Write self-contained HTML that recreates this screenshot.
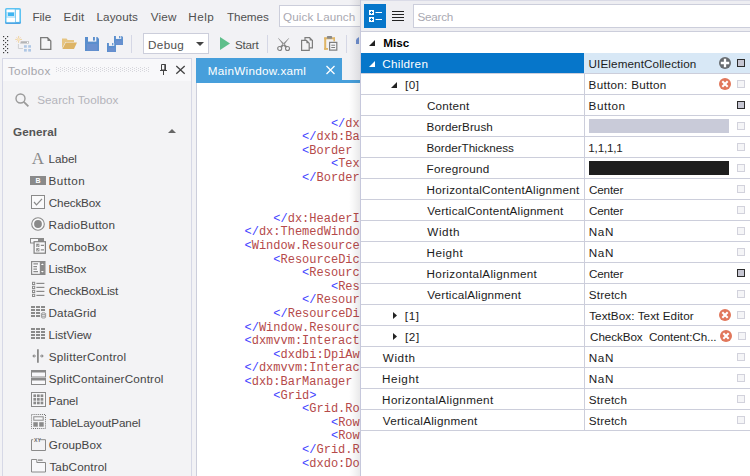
<!DOCTYPE html>
<html><head><meta charset="utf-8"><title>Designer</title>
<style>
*{box-sizing:border-box;margin:0;padding:0}
html,body{width:750px;height:476px;overflow:hidden;background:#f2f2f5}
body{position:relative;font-family:"Liberation Sans",sans-serif;font-size:12px;color:#3f3f3f}
.a{position:absolute}
.tx{position:absolute;white-space:nowrap;line-height:16px;height:16px;font-size:11.7px}
.m{color:#505050}
.ph{color:#a9a9b2}
.ph2{color:#b3b3bb}
.tbh{color:#a6a6ac}
.gen{color:#555;font-weight:bold}
.it{color:#454545}
.tab{color:#fff}
.p{color:#1c1c1c}
.b{color:#000;font-weight:bold}
.w{color:#fff}
.code{position:absolute;left:244.5px;top:117.7px;font-family:"Liberation Mono",monospace;font-size:12px;line-height:13.6px;color:#b54a4a;white-space:pre}
.code div{height:13.6px}
.bl{color:#4444ff}
.hl{position:absolute;left:361px;width:389px;height:1px;background:#ccceDB}
.mk{position:absolute;left:737px;width:8px;height:8px;border:1px solid #d2d2dc;background:#f5f5f7}
.mk.on{border-color:#2b2b2b;background:#c6c6d2}
svg{position:absolute;overflow:visible}
</style></head><body>

<svg class="a" style="left:5px;top:8px" width="16" height="16" viewBox="0 0 16 16">
<defs><linearGradient id="ag" x1="0" y1="0" x2="0" y2="1"><stop offset="0.8" stop-color="#5cc2f2"/><stop offset="1" stop-color="#4a9fe2"/></linearGradient></defs>
<rect x="0" y="0" width="16" height="16" rx="1.600" fill="url(#ag)"/>
<rect x="1.500" y="1.500" width="8.800" height="12.800" fill="#c6e7f9"/>
<rect x="1.700" y="1.700" width="7.800" height="2.300" fill="#fff"/>
<rect x="3" y="4.500" width="6" height="3.500" fill="#3eb5f1"/>
<rect x="1.700" y="10" width="8.400" height="3.900" fill="#fff"/>
<rect x="11" y="1.700" width="3.400" height="12.200" fill="#fff"/>
</svg>
<div class="a" style="left:279px;top:5px;width:90px;height:22px;background:#fff;border:1px solid #ccceDB"></div>
<svg style="left:3px;top:36px" width="5" height="17" viewBox="0 0 5 17"><g fill="#3c3c3c"><rect x="0" y="0" width="1.200" height="1.200"/><rect x="4" y="0" width="1.200" height="1.200"/><rect x="2" y="2" width="1.200" height="1.200"/><rect x="0" y="4" width="1.200" height="1.200"/><rect x="4" y="4" width="1.200" height="1.200"/><rect x="2" y="6" width="1.200" height="1.200"/><rect x="0" y="8" width="1.200" height="1.200"/><rect x="4" y="8" width="1.200" height="1.200"/><rect x="2" y="10" width="1.200" height="1.200"/><rect x="0" y="12" width="1.200" height="1.200"/><rect x="4" y="12" width="1.200" height="1.200"/><rect x="2" y="14" width="1.200" height="1.200"/><rect x="0" y="16" width="1.200" height="1.200"/><rect x="4" y="16" width="1.200" height="1.200"/></g></svg>
<svg style="left:15px;top:36px" width="17" height="16" viewBox="0 0 17 16">
<g stroke="#ecd19a" stroke-width="0.900" fill="none"><path d="M3.600 0v6.800M0.200 3.400h6.800"/><path d="M1.400 1.200l4.400 4.400M5.800 1.200L1.400 5.600" stroke="#f3c9b0" stroke-width="0.700"/></g>
<circle cx="3.600" cy="3.400" r="1.300" fill="#f6e6c4"/>
<path d="M6.200 5.200h7.800v2.400h-9z" fill="#b4b4b6"/><rect x="12" y="5.800" width="1.200" height="1.200" fill="#fff"/>
<path d="M3.400 8v4.500h4.500" stroke="#cfcfd2" fill="none"/>
<g fill="#afc7e5"><rect x="9" y="9.200" width="2.800" height="2.500"/><rect x="13.200" y="9.200" width="2.800" height="2.500"/><rect x="9" y="13" width="2.800" height="2.600"/><rect x="13.200" y="13" width="2.800" height="2.600"/></g>
</svg>
<svg style="left:40px;top:37px" width="12" height="13" viewBox="0 0 12 13">
<path d="M0.7 0.7h6.800l3.300 3.300v8.300h-10.100z" fill="#f4f4f6" stroke="#7a7a7a" stroke-width="1.300"/>
<path d="M7.500 0.700v3.300h3.300z" fill="#7a7a7a"/></svg>
<svg style="left:62px;top:38px" width="15" height="11" viewBox="0 0 15 11">
<path d="M0 0.500h4.500l1.200 1.500h6.300v2h-8.500l-3.500 6.500z" fill="#e6c583"/>
<path d="M3.800 4.600h11.200l-3 6.400h-11.600z" fill="#ddb466"/></svg>
<svg style="left:85px;top:37px" width="14" height="14" viewBox="0 0 14 14">
<path d="M0 0h12.300l1.700 1.700v12.300h-14z" fill="#5a8ecd"/>
<rect x="3" y="-0.100" width="8.300" height="4.700" fill="#f3f3f6"/>
<rect x="8" y="0" width="1.900" height="3.600" fill="#5a8ecd"/>
<rect x="2" y="7" width="10.400" height="6.600" fill="#6a90cf"/></svg>
<svg style="left:114px;top:36px" width="8.96" height="8.96" viewBox="0 0 14 14">
<path d="M0 0h12.300l1.700 1.700v12.300h-14z" fill="#5a8ecd"/>
<rect x="3" y="-0.100" width="8.300" height="4.700" fill="#f3f3f6"/>
<rect x="8" y="0" width="1.900" height="3.600" fill="#5a8ecd"/>
<rect x="2" y="7" width="10.400" height="6.600" fill="#6a90cf"/></svg>
<svg style="left:107.2px;top:42.8px" width="8.96" height="8.96" viewBox="0 0 14 14">
<path d="M0 0h12.300l1.700 1.700v12.300h-14z" fill="#5a8ecd"/>
<rect x="3" y="-0.100" width="8.300" height="4.700" fill="#f3f3f6"/>
<rect x="8" y="0" width="1.900" height="3.600" fill="#5a8ecd"/>
<rect x="2" y="7" width="10.400" height="6.600" fill="#6a90cf"/></svg>
<div class="a" style="left:131px;top:35px;width:1px;height:18px;background:#d5d7e5"></div>
<div class="a" style="left:267px;top:35px;width:1px;height:18px;background:#d5d7e5"></div>
<div class="a" style="left:346px;top:35px;width:1px;height:18px;background:#d5d7e5"></div>
<div class="a" style="left:143px;top:33px;width:66px;height:21px;background:#fff;border:1px solid #ccceDB"></div>
<svg style="left:196px;top:42px" width="8" height="4" viewBox="0 0 8 4"><path d="M0 0h8l-4 4z" fill="#444"/></svg>
<svg style="left:220px;top:37px" width="10" height="13" viewBox="0 0 10 13"><path d="M0 0l10 6.500l-10 6.500z" fill="#5fbf8b"/></svg>
<svg style="left:277px;top:38px" width="13" height="13" viewBox="0 0 13 13"><g fill="none" stroke="#808080" stroke-width="1.100">
<circle cx="2.700" cy="10.500" r="2"/><circle cx="10.500" cy="10.500" r="2"/></g>
<path d="M1.300 0.200l8.900 8.500l-1.900 0.900zM11.900 0.200l-8.900 8.500l1.900 0.900z" fill="#808080" stroke="#808080" stroke-width="0.300"/></svg>
<svg style="left:301px;top:37px" width="12" height="14" viewBox="0 0 12 14"><g fill="#f3f3f5" stroke="#7d7d7d" stroke-width="1.200">
<path d="M4 0.600h4.600l2.800 2.800v7.400h-7.400z"/><path d="M0.600 3.400h4.800l2.800 2.800v7.200h-7.600z"/></g>
<path d="M5.400 3.400v2.800h2.800z" fill="#7d7d7d"/><path d="M8.600 0.600v2.800h2.800z" fill="#7d7d7d"/></svg>
<svg style="left:324px;top:36px" width="14" height="15" viewBox="0 0 14 15">
<g fill="#dfb566"><rect x="0.200" y="1.400" width="2" height="12.400"/><rect x="0.200" y="1.400" width="10.800" height="1.900"/><rect x="9.400" y="1.400" width="1.600" height="4"/><rect x="0.200" y="12" width="3.800" height="1.800"/></g>
<rect x="2.800" y="0" width="5.400" height="2.700" rx="1" fill="#8a8a8a"/>
<rect x="5.600" y="6.400" width="7.200" height="7.700" fill="#f6f6f8" stroke="#7d7d7d" stroke-width="1.200"/>
<path d="M7.300 9.200h3.800M7.300 11.500h3.800" stroke="#7d7d7d" stroke-width="1"/></svg>
<svg style="left:356px;top:37px" width="5" height="7" viewBox="0 0 5 7"><path d="M1 1.500l2-1.500v7h-3v-4z" fill="#6f8fcf"/></svg>
<div class="a" style="left:2px;top:58px;width:190px;height:421px;background:#f3f3f5;border:1px solid #d6d8e6"></div>
<div class="a" style="left:3px;top:59px;width:188px;height:22px;background:#f8f8fa"></div>
<svg style="left:56px;top:67px" width="94" height="5" viewBox="0 0 94 5"><g fill="#d6d6dc"><rect x="0" y="0" width="1" height="1"/><rect x="4" y="0" width="1" height="1"/><rect x="8" y="0" width="1" height="1"/><rect x="12" y="0" width="1" height="1"/><rect x="16" y="0" width="1" height="1"/><rect x="20" y="0" width="1" height="1"/><rect x="24" y="0" width="1" height="1"/><rect x="28" y="0" width="1" height="1"/><rect x="32" y="0" width="1" height="1"/><rect x="36" y="0" width="1" height="1"/><rect x="40" y="0" width="1" height="1"/><rect x="44" y="0" width="1" height="1"/><rect x="48" y="0" width="1" height="1"/><rect x="52" y="0" width="1" height="1"/><rect x="56" y="0" width="1" height="1"/><rect x="60" y="0" width="1" height="1"/><rect x="64" y="0" width="1" height="1"/><rect x="68" y="0" width="1" height="1"/><rect x="72" y="0" width="1" height="1"/><rect x="76" y="0" width="1" height="1"/><rect x="80" y="0" width="1" height="1"/><rect x="84" y="0" width="1" height="1"/><rect x="88" y="0" width="1" height="1"/><rect x="92" y="0" width="1" height="1"/><rect x="0" y="2" width="1" height="1"/><rect x="4" y="2" width="1" height="1"/><rect x="8" y="2" width="1" height="1"/><rect x="12" y="2" width="1" height="1"/><rect x="16" y="2" width="1" height="1"/><rect x="20" y="2" width="1" height="1"/><rect x="24" y="2" width="1" height="1"/><rect x="28" y="2" width="1" height="1"/><rect x="32" y="2" width="1" height="1"/><rect x="36" y="2" width="1" height="1"/><rect x="40" y="2" width="1" height="1"/><rect x="44" y="2" width="1" height="1"/><rect x="48" y="2" width="1" height="1"/><rect x="52" y="2" width="1" height="1"/><rect x="56" y="2" width="1" height="1"/><rect x="60" y="2" width="1" height="1"/><rect x="64" y="2" width="1" height="1"/><rect x="68" y="2" width="1" height="1"/><rect x="72" y="2" width="1" height="1"/><rect x="76" y="2" width="1" height="1"/><rect x="80" y="2" width="1" height="1"/><rect x="84" y="2" width="1" height="1"/><rect x="88" y="2" width="1" height="1"/><rect x="92" y="2" width="1" height="1"/><rect x="0" y="4" width="1" height="1"/><rect x="4" y="4" width="1" height="1"/><rect x="8" y="4" width="1" height="1"/><rect x="12" y="4" width="1" height="1"/><rect x="16" y="4" width="1" height="1"/><rect x="20" y="4" width="1" height="1"/><rect x="24" y="4" width="1" height="1"/><rect x="28" y="4" width="1" height="1"/><rect x="32" y="4" width="1" height="1"/><rect x="36" y="4" width="1" height="1"/><rect x="40" y="4" width="1" height="1"/><rect x="44" y="4" width="1" height="1"/><rect x="48" y="4" width="1" height="1"/><rect x="52" y="4" width="1" height="1"/><rect x="56" y="4" width="1" height="1"/><rect x="60" y="4" width="1" height="1"/><rect x="64" y="4" width="1" height="1"/><rect x="68" y="4" width="1" height="1"/><rect x="72" y="4" width="1" height="1"/><rect x="76" y="4" width="1" height="1"/><rect x="80" y="4" width="1" height="1"/><rect x="84" y="4" width="1" height="1"/><rect x="88" y="4" width="1" height="1"/><rect x="92" y="4" width="1" height="1"/><rect x="2" y="1" width="1" height="1"/><rect x="6" y="1" width="1" height="1"/><rect x="10" y="1" width="1" height="1"/><rect x="14" y="1" width="1" height="1"/><rect x="18" y="1" width="1" height="1"/><rect x="22" y="1" width="1" height="1"/><rect x="26" y="1" width="1" height="1"/><rect x="30" y="1" width="1" height="1"/><rect x="34" y="1" width="1" height="1"/><rect x="38" y="1" width="1" height="1"/><rect x="42" y="1" width="1" height="1"/><rect x="46" y="1" width="1" height="1"/><rect x="50" y="1" width="1" height="1"/><rect x="54" y="1" width="1" height="1"/><rect x="58" y="1" width="1" height="1"/><rect x="62" y="1" width="1" height="1"/><rect x="66" y="1" width="1" height="1"/><rect x="70" y="1" width="1" height="1"/><rect x="74" y="1" width="1" height="1"/><rect x="78" y="1" width="1" height="1"/><rect x="82" y="1" width="1" height="1"/><rect x="86" y="1" width="1" height="1"/><rect x="90" y="1" width="1" height="1"/><rect x="2" y="3" width="1" height="1"/><rect x="6" y="3" width="1" height="1"/><rect x="10" y="3" width="1" height="1"/><rect x="14" y="3" width="1" height="1"/><rect x="18" y="3" width="1" height="1"/><rect x="22" y="3" width="1" height="1"/><rect x="26" y="3" width="1" height="1"/><rect x="30" y="3" width="1" height="1"/><rect x="34" y="3" width="1" height="1"/><rect x="38" y="3" width="1" height="1"/><rect x="42" y="3" width="1" height="1"/><rect x="46" y="3" width="1" height="1"/><rect x="50" y="3" width="1" height="1"/><rect x="54" y="3" width="1" height="1"/><rect x="58" y="3" width="1" height="1"/><rect x="62" y="3" width="1" height="1"/><rect x="66" y="3" width="1" height="1"/><rect x="70" y="3" width="1" height="1"/><rect x="74" y="3" width="1" height="1"/><rect x="78" y="3" width="1" height="1"/><rect x="82" y="3" width="1" height="1"/><rect x="86" y="3" width="1" height="1"/><rect x="90" y="3" width="1" height="1"/></g></svg>
<svg style="left:160px;top:64px" width="7" height="11" viewBox="0 0 7 11"><g fill="none" stroke="#444" stroke-width="1">
<path d="M1.500 0.500h4v5.500h-4z"/><path d="M0 6.500h7M3.500 7v4"/><path d="M5 0.500v5.500" stroke-width="1.400"/></g></svg>
<svg style="left:175.500px;top:66px" width="9" height="8" viewBox="0 0 9 8"><path d="M0.300 0l8.400 7.800M8.700 0l-8.400 7.800" stroke="#444" stroke-width="1.300" fill="none"/></svg>
<svg style="left:15px;top:93px" width="14" height="14" viewBox="0 0 14 14"><circle cx="5.500" cy="5.500" r="4.500" fill="none" stroke="#9a9a9a" stroke-width="1.400"/>
<path d="M8.800 8.800l4.600 4.600" stroke="#9a9a9a" stroke-width="1.800"/></svg>
<svg style="left:168px;top:129px" width="8" height="4" viewBox="0 0 8 4"><path d="M0 4h8l-4-4z" fill="#666"/></svg>
<div class="a" style="left:31px;top:150px;width:14px;height:18px;font-family:'Liberation Serif',serif;font-size:17px;line-height:18px;color:#8a8a8a;text-align:center">A</div>
<div class="a" style="left:30px;top:176px;width:16px;height:9px;background:#8a8a8a;color:#fff;font-size:7px;line-height:9px;font-weight:bold;text-align:center">B</div>
<svg style="left:31px;top:195px" width="14" height="14" viewBox="0 0 14 14"><rect x="0.500" y="0.500" width="13" height="13" fill="#fafafb" stroke="#8a8a8a"/><path d="M3 7l2.500 2.800l5.500-6" fill="none" stroke="#8a8a8a" stroke-width="1.200"/></svg>
<svg style="left:31px;top:217px" width="14" height="14" viewBox="0 0 14 14"><circle cx="7" cy="7" r="6.300" fill="#fafafb" stroke="#8a8a8a" stroke-width="1.100"/><circle cx="7" cy="7" r="3.900" fill="#8a8a8a"/></svg>
<svg style="left:30px;top:238px" width="16" height="16" viewBox="0 0 16 16"><rect x="0.500" y="0.500" width="13" height="4.500" fill="#f8f8fa" stroke="#8a8a8a"/><rect x="8" y="0" width="6" height="5.500" fill="#8a8a8a"/><rect x="4.100" y="3.700" width="11.300" height="11.500" fill="#f8f8fa" stroke="#808080" stroke-width="1.200"/><rect x="6.200" y="5.700" width="3.200" height="3.200" fill="#8a8a8a"/><rect x="6.200" y="10.200" width="3.200" height="3.200" fill="#8a8a8a"/><path d="M6.800 7.600l0.800 0.700l1.400-1.800M6.800 12.100l0.800 0.700l1.400-1.800" stroke="#fff" stroke-width="0.600" fill="none"/><path d="M10.800 7.300h3.200M10.800 11.800h3.200" stroke="#8a8a8a" stroke-width="1.200"/></svg>
<svg style="left:31px;top:261px" width="14.5" height="14" viewBox="0 0 14.5 14"><rect x="0.600" y="0.600" width="13.300" height="12.800" fill="#f8f8fa" stroke="#8a8a8a" stroke-width="1.200"/><rect x="8.800" y="0.600" width="5.100" height="12.800" fill="#8a8a8a"/><path d="M2.400 2.900h4.600M2.400 5.600h3.600M2.400 8.200h3.600M2.400 10.700h4.600" stroke="#8a8a8a" stroke-width="1.200"/><path d="M9.900 4l1.500-1.600l1.500 1.600zM9.900 10l1.500 1.600l1.500-1.600z" fill="#fff"/></svg>
<svg style="left:32px;top:282px" width="13" height="15" viewBox="0 0 13 15"><rect x="0.500" y="0.3" width="2.200" height="2.200" fill="none" stroke="#8a8a8a" stroke-width="1"/><path d="M4.400 1.4h8" stroke="#8a8a8a" stroke-width="1.200"/><rect x="0.500" y="4.3" width="2.200" height="2.200" fill="none" stroke="#8a8a8a" stroke-width="1"/><path d="M4.400 5.4h8" stroke="#8a8a8a" stroke-width="1.200"/><rect x="0.500" y="8.3" width="2.200" height="2.200" fill="none" stroke="#8a8a8a" stroke-width="1"/><path d="M4.400 9.4h8" stroke="#8a8a8a" stroke-width="1.200"/><rect x="0.500" y="12.3" width="2.200" height="2.200" fill="none" stroke="#8a8a8a" stroke-width="1"/><path d="M4.400 13.4h8" stroke="#8a8a8a" stroke-width="1.200"/></svg>
<svg style="left:31px;top:306px" width="15" height="12" viewBox="0 0 15 12"><rect x="0" y="0" width="4" height="2" fill="#8a8a8a"/><rect x="5" y="0" width="4" height="2" fill="#8a8a8a"/><rect x="10" y="0" width="4" height="2" fill="#8a8a8a"/><rect x="0" y="3" width="4" height="2" fill="#8a8a8a"/><rect x="5" y="3" width="4" height="2" fill="#8a8a8a"/><rect x="10" y="3" width="4" height="2" fill="#8a8a8a"/><rect x="0" y="6" width="4" height="2" fill="#8a8a8a"/><rect x="5" y="6" width="4" height="2" fill="#8a8a8a"/><rect x="0" y="9" width="4" height="2" fill="#8a8a8a"/><rect x="5" y="9" width="4" height="2" fill="#8a8a8a"/><path d="M10.400 7.600v3.600a2.100 0.900 0 0 0 4.200 0v-3.600" fill="#e4e4e6" stroke="#8a8a8a" stroke-width="0.800"/><ellipse cx="12.500" cy="7.600" rx="2.100" ry="0.900" fill="#e4e4e6" stroke="#8a8a8a" stroke-width="0.800"/><path d="M10.400 9.500a2.100 0.900 0 0 0 4.200 0" fill="none" stroke="#8a8a8a" stroke-width="0.700"/></svg>
<svg style="left:31px;top:328px" width="14" height="11" viewBox="0 0 14 11"><rect x="0" y="0" width="4" height="2" fill="#8a8a8a"/><rect x="5" y="0" width="4" height="2" fill="#8a8a8a"/><rect x="10" y="0" width="4" height="2" fill="#8a8a8a"/><rect x="0" y="3" width="4" height="2" fill="#8a8a8a"/><rect x="5" y="3" width="4" height="2" fill="#8a8a8a"/><rect x="10" y="3" width="4" height="2" fill="#8a8a8a"/><rect x="0" y="6" width="4" height="2" fill="#8a8a8a"/><rect x="5" y="6" width="4" height="2" fill="#8a8a8a"/><rect x="10" y="6" width="4" height="2" fill="#8a8a8a"/><rect x="0" y="9" width="4" height="2" fill="#8a8a8a"/><rect x="5" y="9" width="4" height="2" fill="#8a8a8a"/><rect x="10" y="9" width="4" height="2" fill="#8a8a8a"/></svg>
<svg style="left:32px;top:349px" width="12" height="14" viewBox="0 0 12 14"><path d="M5.900 0.300v13.400" stroke="#8a8a8a" stroke-width="1.800"/><path d="M0.200 7l2.200-1.900v3.800zM11.800 7l-2.200-1.900v3.800z" fill="#8a8a8a"/><path d="M2 7h2M8 7h2" stroke="#8a8a8a" stroke-width="1.200"/></svg>
<svg style="left:31px;top:370px" width="15" height="15" viewBox="0 0 15 15"><rect x="0.500" y="0.500" width="14" height="6.500" fill="#f8f8fa" stroke="#8a8a8a"/><rect x="0" y="0" width="15" height="2.500" fill="#8a8a8a"/><rect x="0.500" y="8.500" width="14" height="6" fill="#f8f8fa" stroke="#8a8a8a"/><rect x="0" y="8" width="15" height="2.500" fill="#8a8a8a"/></svg>
<svg style="left:31px;top:392px" width="15" height="15" viewBox="0 0 15 15"><rect x="0.500" y="0.500" width="14" height="14" fill="#f8f8fa" stroke="#8a8a8a"/><rect x="2.4" y="2.4" width="2.700" height="2.700" fill="#8a8a8a"/><rect x="6" y="2.4" width="2.700" height="2.700" fill="#8a8a8a"/><rect x="9.6" y="2.4" width="2.700" height="2.700" fill="#8a8a8a"/><rect x="2.4" y="6" width="2.700" height="2.700" fill="#8a8a8a"/><rect x="6" y="6" width="2.700" height="2.700" fill="#8a8a8a"/><rect x="9.6" y="6" width="2.700" height="2.700" fill="#8a8a8a"/><rect x="2.4" y="9.6" width="2.700" height="2.700" fill="#8a8a8a"/><rect x="6" y="9.6" width="2.700" height="2.700" fill="#8a8a8a"/><rect x="9.6" y="9.6" width="2.700" height="2.700" fill="#8a8a8a"/></svg>
<svg style="left:31px;top:414px" width="15" height="15" viewBox="0 0 15 15"><rect x="0.500" y="0.500" width="14" height="14" fill="none" stroke="#6e6e6e" stroke-width="1" stroke-dasharray="1 1.080"/><rect x="2.800" y="2.800" width="9.400" height="3.400" fill="#f8f8fa" stroke="#8a8a8a"/><rect x="2.300" y="8.200" width="4.500" height="4.500" fill="#8a8a8a"/><rect x="8.200" y="8.200" width="4.500" height="4.500" fill="#8a8a8a"/></svg>
<svg style="left:31px;top:437px" width="15" height="14" viewBox="0 0 15 14"><path d="M2.200 2.700h-1.700v10.800h14v-10.800h-6.200" fill="none" stroke="#8a8a8a"/><text x="3" y="4.600" font-family="Liberation Sans,sans-serif" font-size="5.200" font-weight="bold" fill="#6a6a6a">XY</text></svg>
<svg style="left:31px;top:459px" width="15" height="13.5" viewBox="0 0 15 13.5"><path d="M0.500 0.500h5.300v3h8.700v9.500h-14z" fill="#f8f8fa" stroke="#8a8a8a"/><path d="M7 1.100h4.600" stroke="#8a8a8a" stroke-width="1.400"/></svg>
<div class="a" style="left:196px;top:83px;width:560px;height:400px;background:#fff;border-left:1px solid #ccceDB"></div>
<div class="a" style="left:196px;top:58px;width:146px;height:23px;background:#479fdb"></div>
<div class="a" style="left:196px;top:80px;width:560px;height:3px;background:#479fdb"></div>
<svg style="left:326px;top:66px" width="9" height="8" viewBox="0 0 9 8"><path d="M0.500 0l8 8M8.500 0l-8 8" stroke="#fff" stroke-width="1.300" fill="none"/></svg>
<div class="code"><div>&nbsp;&nbsp;&nbsp;&nbsp;&nbsp;&nbsp;&nbsp;&nbsp;&nbsp;&nbsp;&nbsp;&nbsp;<span class="bl">&lt;/</span>dx</div><div>&nbsp;&nbsp;&nbsp;&nbsp;&nbsp;&nbsp;&nbsp;&nbsp;<span class="bl">&lt;/</span>dxb:Ba</div><div>&nbsp;&nbsp;&nbsp;&nbsp;&nbsp;&nbsp;&nbsp;&nbsp;<span class="bl">&lt;</span>Border </div><div>&nbsp;&nbsp;&nbsp;&nbsp;&nbsp;&nbsp;&nbsp;&nbsp;&nbsp;&nbsp;&nbsp;&nbsp;<span class="bl">&lt;</span>Tex</div><div>&nbsp;&nbsp;&nbsp;&nbsp;&nbsp;&nbsp;&nbsp;&nbsp;<span class="bl">&lt;/</span>Border</div><div></div><div></div><div>&nbsp;&nbsp;&nbsp;&nbsp;<span class="bl">&lt;/</span>dx:HeaderI</div><div><span class="bl">&lt;/</span>dx:ThemedWindo</div><div><span class="bl">&lt;</span>Window.Resource</div><div>&nbsp;&nbsp;&nbsp;&nbsp;<span class="bl">&lt;</span>ResourceDic</div><div>&nbsp;&nbsp;&nbsp;&nbsp;&nbsp;&nbsp;&nbsp;&nbsp;<span class="bl">&lt;</span>Resourc</div><div>&nbsp;&nbsp;&nbsp;&nbsp;&nbsp;&nbsp;&nbsp;&nbsp;&nbsp;&nbsp;&nbsp;&nbsp;<span class="bl">&lt;</span>Res</div><div>&nbsp;&nbsp;&nbsp;&nbsp;&nbsp;&nbsp;&nbsp;&nbsp;<span class="bl">&lt;/</span>Resour</div><div>&nbsp;&nbsp;&nbsp;&nbsp;<span class="bl">&lt;/</span>ResourceDi</div><div><span class="bl">&lt;/</span>Window.Resourc</div><div><span class="bl">&lt;</span>dxmvvm:Interact</div><div>&nbsp;&nbsp;&nbsp;&nbsp;<span class="bl">&lt;</span>dxdbi:DpiAw</div><div><span class="bl">&lt;/</span>dxmvvm:Interac</div><div><span class="bl">&lt;</span>dxb:BarManager </div><div>&nbsp;&nbsp;&nbsp;&nbsp;<span class="bl">&lt;</span>Grid<span class="bl">&gt;</span></div><div>&nbsp;&nbsp;&nbsp;&nbsp;&nbsp;&nbsp;&nbsp;&nbsp;<span class="bl">&lt;</span>Grid.Ro</div><div>&nbsp;&nbsp;&nbsp;&nbsp;&nbsp;&nbsp;&nbsp;&nbsp;&nbsp;&nbsp;&nbsp;&nbsp;<span class="bl">&lt;</span>Row</div><div>&nbsp;&nbsp;&nbsp;&nbsp;&nbsp;&nbsp;&nbsp;&nbsp;&nbsp;&nbsp;&nbsp;&nbsp;<span class="bl">&lt;</span>Row</div><div>&nbsp;&nbsp;&nbsp;&nbsp;&nbsp;&nbsp;&nbsp;&nbsp;<span class="bl">&lt;/</span>Grid.R</div><div>&nbsp;&nbsp;&nbsp;&nbsp;&nbsp;&nbsp;&nbsp;&nbsp;<span class="bl">&lt;</span>dxdo:Do</div></div>
<div class="a" style="left:349px;top:0;width:11px;height:476px;background:linear-gradient(90deg,rgba(0,0,10,0),rgba(0,0,10,0.03) 40%,rgba(0,0,10,0.085))"></div><div class="a" style="left:360px;top:-1px;width:392px;height:480px;background:#fff;border-left:1px solid #c6c8dc"></div>
<div class="a" style="left:361px;top:0;width:389px;height:31px;background:#eeeef2"></div>
<div class="hl" style="top:31px"></div>
<div class="hl" style="top:0px;background:#dadbe7"></div>
<div class="a" style="left:364px;top:4px;width:22px;height:24px;background:#0676ca"></div>
<svg style="left:369px;top:10px" width="13" height="12" viewBox="0 0 13 12"><rect x="0" y="0" width="5" height="5" fill="#fff"/><rect x="0" y="7" width="5" height="5" fill="#fff"/>
<path d="M1 2.500h3M2.500 1v3M1 9.500h3M2.500 8v3" stroke="#0676ca" stroke-width="1"/><path d="M6.500 2.500h6.500M6.500 9.500h6.500" stroke="#fff" stroke-width="1"/></svg>
<svg style="left:392px;top:11px" width="12" height="10" viewBox="0 0 12 10"><path d="M0 0.500h12M0 3.500h12M0 6.500h12M0 9.500h12" stroke="#222" stroke-width="1"/></svg>
<div class="a" style="left:413px;top:4px;width:345px;height:24px;background:#fff;border:1px solid #ccceDB"></div>
<div class="a" style="left:361px;top:53px;width:223px;height:20px;background:#0676ca"></div>
<div class="a" style="left:584px;top:53px;width:166px;height:20px;background:#d8e8f6"></div>
<div class="hl" style="top:73px"></div>
<div class="hl" style="top:94px"></div>
<div class="hl" style="top:115px"></div>
<div class="hl" style="top:136px"></div>
<div class="hl" style="top:157px"></div>
<div class="hl" style="top:178px"></div>
<div class="hl" style="top:199px"></div>
<div class="hl" style="top:220px"></div>
<div class="hl" style="top:241px"></div>
<div class="hl" style="top:262px"></div>
<div class="hl" style="top:283px"></div>
<div class="hl" style="top:304px"></div>
<div class="hl" style="top:325px"></div>
<div class="hl" style="top:346px"></div>
<div class="hl" style="top:367px"></div>
<div class="hl" style="top:388px"></div>
<div class="hl" style="top:409px"></div>
<div class="hl" style="top:430px"></div>
<div class="a" style="left:584px;top:74px;width:1px;height:357px;background:#ccceDB"></div>
<svg style="left:369px;top:39.5px" width="6" height="6" viewBox="0 0 6 6"><path d="M6 0v6h-6z" fill="#222"/></svg>
<svg style="left:369px;top:60.5px" width="6" height="6" viewBox="0 0 6 6"><path d="M6 0v6h-6z" fill="#fff"/></svg>
<svg style="left:390.8px;top:81.5px" width="6" height="6" viewBox="0 0 6 6"><path d="M6 0v6h-6z" fill="#222"/></svg>
<svg style="left:392.5px;top:312px" width="4" height="7" viewBox="0 0 4 7"><path d="M0 0l4 3.500l-4 3.500z" fill="#222"/></svg>
<svg style="left:392.5px;top:333px" width="4" height="7" viewBox="0 0 4 7"><path d="M0 0l4 3.500l-4 3.500z" fill="#222"/></svg>
<div class="a" style="left:589px;top:119px;width:140px;height:14px;background:#c9cbd9"></div>
<div class="a" style="left:589px;top:161px;width:140px;height:14px;background:#1e1e1e"></div>
<div class="mk on" style="top:59px"></div>
<div class="mk" style="top:80px"></div>
<div class="mk on" style="top:101px"></div>
<div class="mk" style="top:122px"></div>
<div class="mk" style="top:143px"></div>
<div class="mk" style="top:164px"></div>
<div class="mk" style="top:185px"></div>
<div class="mk" style="top:206px"></div>
<div class="mk" style="top:227px"></div>
<div class="mk" style="top:248px"></div>
<div class="mk on" style="top:269px"></div>
<div class="mk" style="top:290px"></div>
<div class="mk" style="top:311px"></div>
<div class="mk" style="top:332px;left:738px"></div>
<div class="mk" style="top:353px"></div>
<div class="mk" style="top:374px"></div>
<div class="mk" style="top:395px"></div>
<div class="mk" style="top:416px"></div>
<svg style="left:719px;top:57px" width="12" height="12" viewBox="0 0 12 12"><circle cx="6" cy="6" r="6" fill="#686c70"/><path d="M6 1.800v8.400M1.800 6h8.400" stroke="#fff" stroke-width="2.300"/></svg>
<svg style="left:719px;top:78px" width="12" height="12" viewBox="0 0 12 12"><circle cx="6" cy="6" r="6" fill="#e1775b"/><path d="M3.300 3.300l5.400 5.400M8.700 3.300l-5.400 5.400" stroke="#fff" stroke-width="2.100"/></svg>
<svg style="left:719px;top:309px" width="12" height="12" viewBox="0 0 12 12"><circle cx="6" cy="6" r="6" fill="#e1775b"/><path d="M3.300 3.300l5.400 5.400M8.700 3.300l-5.400 5.400" stroke="#fff" stroke-width="2.100"/></svg>
<svg style="left:720px;top:330px" width="12" height="12" viewBox="0 0 12 12"><circle cx="6" cy="6" r="6" fill="#e1775b"/><path d="M3.300 3.300l5.400 5.400M8.700 3.300l-5.400 5.400" stroke="#fff" stroke-width="2.100"/></svg>
<span id="t0" class="tx m" style="left:32.51px;top:8.70px;letter-spacing:-0.057px">File</span>
<span id="t1" class="tx m" style="left:63.62px;top:8.70px;letter-spacing:0.171px">Edit</span>
<span id="t2" class="tx m" style="left:96.49px;top:8.70px;letter-spacing:0.077px">Layouts</span>
<span id="t3" class="tx m" style="left:150.67px;top:8.70px;letter-spacing:0.196px">View</span>
<span id="t4" class="tx m" style="left:188.34px;top:8.70px;letter-spacing:0.499px">Help</span>
<span id="t5" class="tx m" style="left:227.03px;top:8.70px;letter-spacing:-0.095px">Themes</span>
<span id="t6" class="tx ph" style="left:283.12px;top:8.70px;letter-spacing:0.062px">Quick Launch</span>
<span id="t7" class="tx m" style="left:148.07px;top:36.70px;letter-spacing:0.317px;height:14px;overflow:hidden">Debug</span>
<span id="t8" class="tx m" style="left:234.90px;top:36.50px;letter-spacing:-0.215px">Start</span>
<span id="t9" class="tx tbh" style="left:7.89px;top:62.90px;letter-spacing:0.348px">Toolbox</span>
<span id="t10" class="tx ph2" style="left:37.20px;top:91.90px;letter-spacing:0.062px">Search Toolbox</span>
<span id="t11" class="tx gen" style="left:13.01px;top:123.70px;letter-spacing:0.079px">General</span>
<span id="t12" class="tx it" style="left:48.58px;top:150.80px;letter-spacing:-0.060px">Label</span>
<span id="t13" class="tx it" style="left:48.55px;top:172.80px;letter-spacing:0.494px">Button</span>
<span id="t14" class="tx it" style="left:48.86px;top:194.80px;letter-spacing:-0.182px">CheckBox</span>
<span id="t15" class="tx it" style="left:48.55px;top:216.80px;letter-spacing:0.221px">RadioButton</span>
<span id="t16" class="tx it" style="left:48.86px;top:238.80px;letter-spacing:0.145px">ComboBox</span>
<span id="t17" class="tx it" style="left:48.55px;top:260.80px;letter-spacing:-0.104px">ListBox</span>
<span id="t18" class="tx it" style="left:48.86px;top:282.80px;letter-spacing:-0.188px">CheckBoxList</span>
<span id="t19" class="tx it" style="left:48.55px;top:304.80px;letter-spacing:0.134px">DataGrid</span>
<span id="t20" class="tx it" style="left:48.56px;top:326.80px;letter-spacing:-0.045px">ListView</span>
<span id="t21" class="tx it" style="left:48.71px;top:348.80px;letter-spacing:0.240px">SplitterControl</span>
<span id="t22" class="tx it" style="left:48.71px;top:370.80px;letter-spacing:0.184px">SplitContainerControl</span>
<span id="t23" class="tx it" style="left:48.55px;top:392.80px;letter-spacing:-0.103px">Panel</span>
<span id="t24" class="tx it" style="left:49.39px;top:414.80px;letter-spacing:-0.109px">TableLayoutPanel</span>
<span id="t25" class="tx it" style="left:48.82px;top:436.80px;letter-spacing:0.061px">GroupBox</span>
<span id="t26" class="tx it" style="left:49.43px;top:458.80px;letter-spacing:0.110px">TabControl</span>
<span id="t27" class="tx tab" style="left:207.73px;top:62.70px;letter-spacing:0.290px">MainWindow.xaml</span>
<span id="t28" class="tx ph" style="left:417.50px;top:8.70px;letter-spacing:-0.250px">Search</span>
<span id="t29" class="tx b" style="left:383.20px;top:34.90px;letter-spacing:0.068px">Misc</span>
<span id="t30" class="tx p w" style="left:382.20px;top:55.90px;letter-spacing:0.309px">Children</span>
<span id="t31" class="tx p " style="left:405.03px;top:76.90px;letter-spacing:0.439px">[0]</span>
<span id="t32" class="tx p " style="left:426.93px;top:97.90px;letter-spacing:0.225px">Content</span>
<span id="t33" class="tx p " style="left:426.58px;top:118.90px;letter-spacing:0.066px">BorderBrush</span>
<span id="t34" class="tx p " style="left:426.58px;top:139.90px;letter-spacing:-0.023px">BorderThickness</span>
<span id="t35" class="tx p " style="left:426.58px;top:160.90px;letter-spacing:0.263px">Foreground</span>
<span id="t36" class="tx p " style="left:426.58px;top:181.90px;letter-spacing:0.285px">HorizontalContentAlignment</span>
<span id="t37" class="tx p " style="left:427.21px;top:202.90px;letter-spacing:0.208px">VerticalContentAlignment</span>
<span id="t38" class="tx p " style="left:427.32px;top:223.90px;letter-spacing:0.588px">Width</span>
<span id="t39" class="tx p " style="left:426.58px;top:244.90px;letter-spacing:0.483px">Height</span>
<span id="t40" class="tx p " style="left:426.58px;top:265.90px;letter-spacing:0.313px">HorizontalAlignment</span>
<span id="t41" class="tx p " style="left:427.21px;top:286.90px;letter-spacing:0.216px">VerticalAlignment</span>
<span id="t42" class="tx p " style="left:404.85px;top:307.90px;letter-spacing:0.591px">[1]</span>
<span id="t43" class="tx p " style="left:404.95px;top:328.90px;letter-spacing:0.656px">[2]</span>
<span id="t44" class="tx p " style="left:382.84px;top:349.90px;letter-spacing:0.582px">Width</span>
<span id="t45" class="tx p " style="left:382.10px;top:370.90px;letter-spacing:0.574px">Height</span>
<span id="t46" class="tx p " style="left:382.10px;top:391.90px;letter-spacing:0.364px">HorizontalAlignment</span>
<span id="t47" class="tx p " style="left:382.77px;top:412.90px;letter-spacing:0.256px">VerticalAlignment</span>
<span id="t48" class="tx p" style="left:588.58px;top:55.90px;letter-spacing:0.098px">UIElementCollection</span>
<span id="t49" class="tx p" style="left:588.60px;top:76.90px;letter-spacing:0.281px">Button: Button</span>
<span id="t50" class="tx p" style="left:588.60px;top:97.90px;letter-spacing:0.515px">Button</span>
<span id="t51" class="tx p" style="left:588.34px;top:139.90px;letter-spacing:-0.215px">1,1,1,1</span>
<span id="t52" class="tx p" style="left:588.90px;top:181.90px;letter-spacing:-0.123px">Center</span>
<span id="t53" class="tx p" style="left:588.90px;top:202.90px;letter-spacing:-0.123px">Center</span>
<span id="t54" class="tx p" style="left:588.70px;top:223.90px;letter-spacing:0.700px">NaN</span>
<span id="t55" class="tx p" style="left:588.70px;top:244.90px;letter-spacing:0.700px">NaN</span>
<span id="t56" class="tx p" style="left:588.90px;top:265.90px;letter-spacing:-0.123px">Center</span>
<span id="t57" class="tx p" style="left:588.74px;top:286.90px;letter-spacing:0.187px">Stretch</span>
<span id="t58" class="tx p" style="left:589.15px;top:307.90px;letter-spacing:0.075px">TextBox: Text Editor</span>
<span id="t59" class="tx p" style="left:590.12px;top:328.90px;letter-spacing:-0.098px">CheckBox  Content:Ch...</span>
<span id="t60" class="tx p" style="left:588.70px;top:349.90px;letter-spacing:0.700px">NaN</span>
<span id="t61" class="tx p" style="left:588.70px;top:370.90px;letter-spacing:0.700px">NaN</span>
<span id="t62" class="tx p" style="left:588.74px;top:391.90px;letter-spacing:0.187px">Stretch</span>
<span id="t63" class="tx p" style="left:588.74px;top:412.90px;letter-spacing:0.187px">Stretch</span>
</body></html>
